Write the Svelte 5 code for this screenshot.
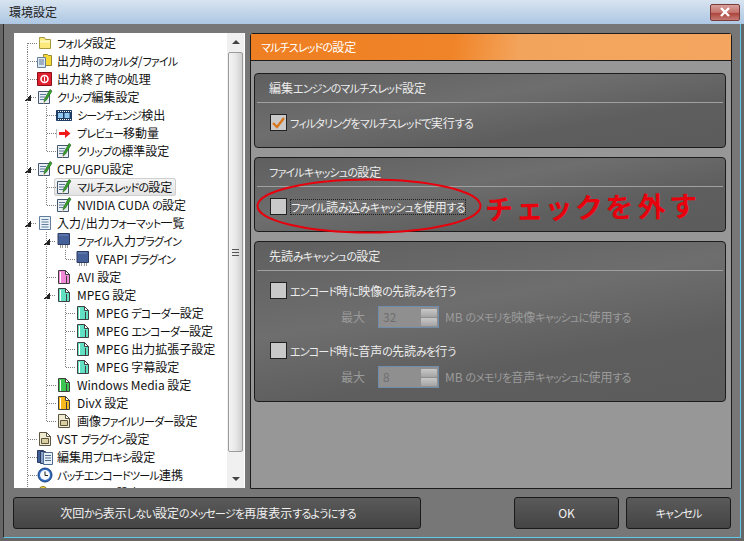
<script>
  const rows = [
    { label: 'フォルダ設定', cells: ['f'], icon: 'folder' },
    { label: '出力時のフォルダ/ファイル', cells: ['t'], icon: 'folderfile' },
    { label: '出力終了時の処理', cells: ['t'], icon: 'stop' },
    { label: 'クリップ編集設定', cells: ['e'], icon: 'edit' },
    { label: 'シーンチェンジ検出', cells: ['v', 't'], icon: 'film' },
    { label: 'プレビュー移動量', cells: ['v', 't'], icon: 'arrow' },
    { label: 'クリップの標準設定', cells: ['v', 'l'], icon: 'edit' },
    { label: 'CPU/GPU設定', cells: ['e'], icon: 'edit' },
    { label: 'マルチスレッドの設定', cells: ['v', 't'], icon: 'edit', selected: true },
    { label: 'NVIDIA CUDA の設定', cells: ['v', 'l'], icon: 'edit' },
    { label: '入力/出力フォーマット一覧', cells: ['e'], icon: 'list' },
    { label: 'ファイル入力プラグイン', cells: ['v', 'e'], icon: 'chip' },
    { label: 'VFAPI プラグイン', cells: ['v', 'v', 'l'], icon: 'chip' },
    { label: 'AVI 設定', cells: ['v', 't'], icon: 'file', color: '#f08ad8' },
    { label: 'MPEG 設定', cells: ['v', 'e'], icon: 'file', color: '#62e0c4' },
    { label: 'MPEG デコーダー設定', cells: ['v', 'v', 't'], icon: 'file', color: '#62e0c4' },
    { label: 'MPEG エンコーダー設定', cells: ['v', 'v', 't'], icon: 'file', color: '#62e0c4' },
    { label: 'MPEG 出力拡張子設定', cells: ['v', 'v', 't'], icon: 'file', color: '#62e0c4' },
    { label: 'MPEG 字幕設定', cells: ['v', 'v', 'l'], icon: 'file', color: '#62e0c4' },
    { label: 'Windows Media 設定', cells: ['v', 't'], icon: 'file', color: '#3cc850' },
    { label: 'DivX 設定', cells: ['v', 't'], icon: 'file', color: '#f8b820' },
    { label: '画像ファイルリーダー設定', cells: ['v', 'l'], icon: 'image' },
    { label: 'VST プラグイン設定', cells: ['t'], icon: 'image' },
    { label: '編集用プロキシ設定', cells: ['t'], icon: 'proxy' },
    { label: 'バッチエンコードツール連携', cells: ['t'], icon: 'clock' },
    { label: 'ショートカット設定', cells: ['t'], icon: 'key' }
  ];

  // the old UI font has much narrower kana than Noto, so kana runs get tightened
  const runs = (s) => s.split(/([\u3040-\u30ff]+)/);
</script>

{#snippet txt(s)}{#each runs(s) as run, i}{#if i % 2}<span class="kana">{run}</span>{:else}{run}{/if}{/each}{/snippet}

{#snippet icon(kind, color)}
  <svg class="icon" viewBox="0 0 16 16" width="16" height="16">
    {#if kind === 'folder'}
      <path d="M2.500 4.500v-2h5l1 2h5v9h-11z" fill="#fbe97a" stroke="#a8983c" />
      <path d="M3 5.500h10v2H3z" fill="#fff8c0" />
    {:else if kind === 'folderfile'}
      <path d="M6.500 3.500v-2h4l1 1h3v10h-8z" fill="#f6d838" stroke="#9a8a30" />
      <path d="M.5 4.500h8v10h-8z" fill="#dfe8f2" stroke="#66809c" />
      <path d="M2 7h5M2 9h5M2 11h5" stroke="#5b7797" />
    {:else if kind === 'stop'}
      <path d="M.5 1.500h14v13H.5z" fill="#e0202c" stroke="#8a1018" />
      <circle cx="7.500" cy="8" r="3.500" fill="none" stroke="#fff" stroke-width="1.600" />
      <path d="M7.500 5.500v5" stroke="#fff" />
    {:else if kind === 'edit'}
      <path d="M1.500 2.500h11v12h-11z" fill="#eaf0f6" stroke="#44586e" />
      <path d="M3 5.500h6M3 8h5M3 10.500h4" stroke="#5b7797" />
      <path d="M13 .5l2 1.500-5.500 9-2.500 2 .5-3z" fill="#36a02c" stroke="#1f5c18" stroke-width=".6" />
      <path d="M7 12.500l-1 2.500 2-1.500z" fill="#d8b890" />
    {:else if kind === 'film'}
      <path d="M.5 3.500h15v10H.5z" fill="#1f3c64" stroke="#1f3c64" />
      <path d="M2 6h5v5H2zM8.500 6h5v5h-5z" fill="#8fc8f0" />
      <path d="M2 4.500h1M4 4.500h1M6 4.500h1M8 4.500h1M10 4.500h1M12 4.500h1M14 4.500h1M2 12.500h1M4 12.500h1M6 12.500h1M8 12.500h1M10 12.500h1M12 12.500h1M14 12.500h1" stroke="#fff" />
    {:else if kind === 'arrow'}
      <path d="M.5 4v9" stroke="#c0c0c0" />
      <path d="M3 7h6V4l5.500 4.500L9 13v-3H3z" fill="#f01818" />
    {:else if kind === 'list'}
      <path d="M2.500 1.500h11v13h-11z" fill="#e8f0f8" stroke="#5f7c9c" />
      <path d="M4.500 4.500h7M4.500 7h7M4.500 9.500h7M4.500 12h7" stroke="#5f7c9c" />
    {:else if kind === 'chip'}
      <path d="M2 .5h11.500v11H2z" fill="#46609a" stroke="#2c3c60" />
      <path d="M3 1.500h9v1H3z" fill="#7088b8" />
      <path d="M4.500 12v3M6.500 12v3M9.500 12v3M11.500 12v3" stroke="#999" />
    {:else if kind === 'file'}
      <path d="M2.500 1.500h7l4 4v9h-11z" fill={color} stroke="#404040" />
      <path d="M9.500 1.500v4h4z" fill="#fff" stroke="#404040" />
      <path d="M4.500 3v11" stroke="#fff" />
      <path d="M10.500 7v7" stroke="#404040" />
    {:else if kind === 'image'}
      <path d="M2.500 1.500h7l4 4v9h-11z" fill="#f0ead0" stroke="#5c5640" />
      <path d="M9.500 1.500v4h4z" fill="#fff" stroke="#5c5640" />
      <path d="M4.500 7.500h7v5h-7z" fill="#d8cea0" stroke="#5c5640" />
    {:else if kind === 'proxy'}
      <path d="M.5 1.500h6v12h-6z" fill="#3e5f98" stroke="#2c3c60" />
      <path d="M3.500 2.500h5v12h-5z" fill="#8aa4cc" stroke="#2c3c60" />
      <path d="M6.500 3.500h9v12h-9z" fill="#e8f0f8" stroke="#4f6c90" />
      <path d="M8 6.500h6M8 9h6M8 11.500h6" stroke="#4f6c90" />
    {:else if kind === 'clock'}
      <circle cx="8" cy="8" r="7" fill="#2f6cc0" stroke="#1a3f80" />
      <circle cx="8" cy="8" r="5" fill="#f6f8fc" />
      <path d="M8 4.500V8.500h3" fill="none" stroke="#222" />
    {:else if kind === 'key'}
      <circle cx="6" cy="6" r="4.500" fill="#f6d838" stroke="#8a7a20" />
    {/if}
  </svg>
{/snippet}

<div class="window">
  <div class="titlebar">
    <span class="title">環境設定</span>
    <button class="close" aria-label="閉じる">
      <svg viewBox="0 0 12 10" width="12" height="10">
        <path d="M2 1l8 8M10 1L2 9" stroke="#fff" stroke-width="2.400" />
      </svg>
    </button>
  </div>

  <div class="client">
    <div class="main">
      <div class="tree">
        <div class="tree-list">
          {#each rows as row}
            <div class="row">
              {#each row.cells as cell}
                <span class="cell {cell}"></span>
              {/each}
              <span class="item" class:selected={row.selected}>
                {@render icon(row.icon, row.color)}
                <span class="label">{@render txt(row.label)}</span>
              </span>
            </div>
          {/each}
        </div>
        <div class="scrollbar">
          <div class="sb-btn"><span class="arrow-up"></span></div>
          <div class="sb-thumb">
            <span class="grip"></span>
          </div>
          <div class="sb-track"></div>
          <div class="sb-btn"><span class="arrow-down"></span></div>
        </div>
      </div>

      <div class="panel">
        <div class="panel-head"><span>{@render txt('マルチスレッドの設定')}</span></div>
        <div class="panel-body">
          <section class="group">
            <h3><span>{@render txt('編集エンジンのマルチスレッド設定')}</span></h3>
            <div class="group-body">
              <div class="check-row">
                <span class="check">
                  <svg viewBox="0 0 15 15" width="15" height="15">
                    <path d="M2 8l4 4 7-9" fill="none" stroke="#d9761c" stroke-width="2.400" />
                  </svg>
                </span>
                <span>{@render txt('フィルタリングをマルチスレッドで実行する')}</span>
              </div>
            </div>
          </section>

          <section class="group">
            <h3><span>{@render txt('ファイルキャッシュの設定')}</span></h3>
            <div class="group-body">
              <div class="check-row">
                <span class="check"></span>
                <span class="focused">{@render txt('ファイル読み込みキャッシュを使用する')}</span>
              </div>
            </div>
          </section>

          <section class="group tall">
            <h3><span>{@render txt('先読みキャッシュの設定')}</span></h3>
            <div class="group-body">
              <div class="check-row">
                <span class="check"></span>
                <span>{@render txt('エンコード時に映像の先読みを行う')}</span>
              </div>
              <div class="spin-row">
                <span class="max">最大</span>
                <span class="spin">
                  <span class="spin-value">32</span>
                  <span class="spin-btns"><i></i><i></i></span>
                </span>
                <span>{@render txt('MB のメモリを映像キャッシュに使用する')}</span>
              </div>
              <div class="check-row second">
                <span class="check"></span>
                <span>{@render txt('エンコード時に音声の先読みを行う')}</span>
              </div>
              <div class="spin-row">
                <span class="max">最大</span>
                <span class="spin">
                  <span class="spin-value">8</span>
                  <span class="spin-btns"><i></i><i></i></span>
                </span>
                <span>{@render txt('MB のメモリを音声キャッシュに使用する')}</span>
              </div>
            </div>
          </section>
        </div>
      </div>
    </div>

    <div class="footer">
      <button class="btn wide">{@render txt('次回から表示しない設定のメッセージを再度表示するようにする')}</button>
      <button class="btn">OK</button>
      <button class="btn">{@render txt('キャンセル')}</button>
    </div>
  </div>

  <svg class="ellipse" viewBox="0 0 226 56" width="226" height="56">
    <ellipse cx="113" cy="28" rx="111.500" ry="26.500" fill="none" stroke="#e8000c" stroke-width="2" />
  </svg>
  <span class="note">チェックを外す</span>
</div>

<style>
  :global(body) {
    margin: 0;
    background: #555;
  }

  .window {
    position: relative;
    box-sizing: border-box;
    width: 744px;
    height: 541px;
    display: flex;
    flex-direction: column;
    padding: 0 3px 3px;
    overflow: hidden;
    background: linear-gradient(#d8e4f0 0, #adc7e4 24px, #666 24px);
    font-family: "Noto Sans CJK JP", "Liberation Sans", sans-serif;
    font-size: 12px;
    font-feature-settings: "palt";
    line-height: 1;
  }

  .kana {
    font-size: 11px;
    letter-spacing: -0.8px;
  }

  .titlebar {
    flex: none;
    height: 24px;
    margin-left: 6px;
    display: flex;
    align-items: center;
    justify-content: space-between;
  }

  .title {
    color: #222;
  }

  .close {
    width: 30px;
    height: 17px;
    margin-right: 1px;
    padding: 0;
    display: flex;
    align-items: center;
    justify-content: center;
    border: 1px solid #7a3a3a;
    border-radius: 2px;
    background: linear-gradient(#d8a09c, #c4726c 50%, #aa4038 51%, #c47a72);
  }

  .client {
    flex: 1;
    min-height: 0;
    box-sizing: border-box;
    padding: 9px 8px 8px 9px;
    display: flex;
    flex-direction: column;
    background: #777;
    border-left: 1px solid #2a2a2a;
    border-right: 1px solid #62c8ea;
    border-bottom: 1px solid #62c8ea;
  }

  .main {
    height: 456px;
    display: flex;
    gap: 5px;
  }

  .tree {
    flex: none;
    width: 231px;
    height: 455px;
    margin-left: 1px;
    display: flex;
    background: #fff;
    overflow: hidden;
  }

  .tree-list {
    flex: 1;
    min-width: 0;
    padding: 1px 0 0 4px;
    overflow: hidden;
    color: #111;
  }

  .row {
    height: 18px;
    display: flex;
    align-items: center;
    white-space: nowrap;
  }

  .cell {
    position: relative;
    flex: none;
    width: 19px;
    height: 18px;
  }

  .cell.v::before,
  .cell.t::before,
  .cell.e::before,
  .cell.l::before,
  .cell.f::before {
    content: "";
    position: absolute;
    left: 9px;
    top: 0;
    width: 1px;
    height: 18px;
    background: repeating-linear-gradient(#808080 0 1px, transparent 1px 2px);
  }

  .cell.l::before {
    height: 10px;
  }

  .cell.f::before {
    top: 9px;
    height: 9px;
  }

  .cell.t::after,
  .cell.l::after,
  .cell.f::after,
  .cell.e::after {
    content: "";
    position: absolute;
    left: 10px;
    top: 9px;
    width: 9px;
    height: 1px;
    background: repeating-linear-gradient(90deg, #808080 0 1px, transparent 1px 2px);
  }

  .cell.e::after {
    left: 13px;
    width: 6px;
  }

  .cell.e {
    background: linear-gradient(135deg, transparent 50%, #222 50%) 7px 7px / 6px 6px no-repeat;
  }

  .item {
    display: flex;
    align-items: center;
    gap: 4px;
    height: 18px;
    margin-left: -2px;
    padding: 0 4px 0 2px;
    box-sizing: border-box;
    border-radius: 3px;
  }

  .cell + .cell ~ .item {
    gap: 5px;
  }

  .item.selected {
    background: linear-gradient(#f6f6f6, #e2e2e2);
    box-shadow: inset 0 0 0 1px #cfcfcf;
  }

  .icon {
    flex: none;
  }

  .scrollbar {
    flex: none;
    width: 17px;
    margin-right: 1px;
    display: flex;
    flex-direction: column;
    background: #f0f0f0;
  }

  .sb-btn {
    flex: none;
    height: 18px;
    display: flex;
    align-items: center;
    justify-content: center;
  }

  .arrow-up,
  .arrow-down {
    width: 0;
    height: 0;
    border-left: 4px solid transparent;
    border-right: 4px solid transparent;
  }

  .arrow-up {
    border-bottom: 4px solid #444;
  }

  .arrow-down {
    border-top: 4px solid #444;
  }

  .sb-thumb {
    flex: none;
    height: 400px;
    margin: 1px 1px 0;
    display: flex;
    align-items: center;
    justify-content: center;
    box-sizing: border-box;
    border: 1px solid #9a9a9a;
    border-radius: 2px;
    background: linear-gradient(90deg, #f4f4f4, #e8e8e8 50%, #cfcfcf);
  }

  .grip {
    width: 7px;
    height: 7px;
    background: repeating-linear-gradient(#555 0 1px, transparent 1px 3px);
  }

  .sb-track {
    flex: 1;
  }

  .panel {
    flex: none;
    width: 482px;
    box-sizing: border-box;
    display: flex;
    flex-direction: column;
    background: #979797;
    border: 1px solid #1c1c1c;
    border-radius: 3px 3px 0 0;
  }

  .panel-head {
    flex: none;
    height: 27px;
    box-sizing: border-box;
    padding: 0 10px;
    display: flex;
    align-items: center;
    color: #fff;
    border-bottom: 1px solid #1c1c1c;
    background: linear-gradient(100deg, #ee7f22 0, #f08428 42%, #f3a45c 56%, #f4a660 100%);
  }

  .panel-body {
    padding: 12px 5px 0 3px;
    display: flex;
    flex-direction: column;
    gap: 9px;
  }

  .group {
    height: 75px;
    box-sizing: border-box;
    border: 1px solid #1c1c1c;
    border-radius: 4px;
    color: #ececec;
    background: linear-gradient(170deg, #5f5f5f 0, #6e6e6e 40%, #5e5e5e 70%, #5c5c5c 100%);
  }

  .group.tall {
    height: 161px;
  }

  .group h3 {
    margin: 0 2px;
    height: 29px;
    padding-left: 12px;
    box-sizing: border-box;
    display: flex;
    align-items: center;
    font-size: 12px;
    font-weight: 400;
    border-bottom: 1px solid #a0a0a0;
  }

  .group-body {
    padding: 11px 0 0 15px;
  }

  .check-row {
    height: 17px;
    display: flex;
    align-items: center;
    gap: 3px;
  }

  .check-row.second {
    margin-top: 14px;
  }

  .check {
    flex: none;
    width: 15px;
    height: 15px;
    display: block;
    background: #c9c9c9;
    border: 1px solid #222;
  }

  .check svg {
    display: block;
  }

  .focused {
    padding: 2px 1px;
    outline: 1px dotted #222;
    outline-offset: -1px;
  }

  .spin-row {
    margin-top: 7px;
    height: 22px;
    padding-left: 71px;
    display: flex;
    align-items: center;
    color: #9b9b9b;
  }

  .max {
    width: 37px;
  }

  .spin {
    flex: none;
    width: 61px;
    height: 22px;
    margin-right: 6px;
    box-sizing: border-box;
    padding: 1px 1px 1px 4px;
    display: flex;
    align-items: center;
    justify-content: space-between;
    color: #6e6e6e;
    background: #8f8f8f;
    border: 1px solid #6f8cab;
  }

  .spin-btns {
    width: 16px;
    display: flex;
    flex-direction: column;
    gap: 1px;
  }

  .spin-btns i {
    display: block;
    height: 8px;
    border-radius: 1px;
    background: linear-gradient(#c8c8c8, #a4a4a4);
  }

  .footer {
    height: 32px;
    margin: 8px 1px 0 0;
    display: flex;
    gap: 7px;
  }

  .btn {
    width: 105px;
    padding: 0;
    color: #f0f0f0;
    font: inherit;
    font-feature-settings: "palt";
    background: linear-gradient(#5a5a5a, #444);
    border: 1px solid #1a1a1a;
    border-radius: 3px;
  }

  .btn.wide {
    width: 408px;
    margin-right: 86px;
    padding-right: 18px;
  }

  .ellipse {
    position: absolute;
    left: 256px;
    top: 178px;
  }

  .note {
    position: absolute;
    left: 486px;
    top: 192px;
    color: #e8000c;
    font-size: 28px;
    font-weight: 700;
    letter-spacing: 5px;
    white-space: nowrap;
    transform: rotate(-1deg);
  }
</style>
